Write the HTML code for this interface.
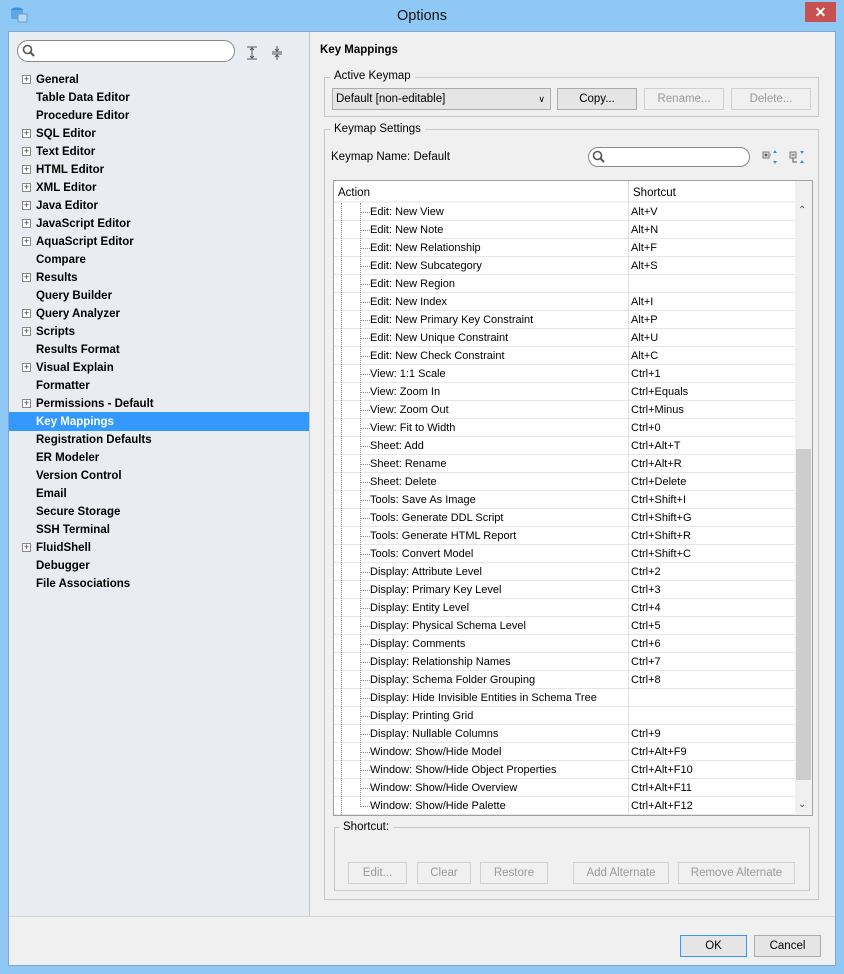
<!DOCTYPE html>
<html><head><meta charset="utf-8"><style>
*{box-sizing:border-box;margin:0;padding:0}
body{width:844px;height:974px;background:#8fc7f5;font-family:"Liberation Sans",sans-serif;font-size:11.5px;color:#000;position:relative;overflow:hidden}
.abs{position:absolute}
.title{left:0;top:0;width:844px;height:31px;text-align:center;line-height:33px;font-size:14.5px;color:#111}
.close{left:805px;top:2px;width:31px;height:20px;background:#c75050;color:#fff;text-align:center;line-height:20px;font-size:14px;font-weight:bold}
.client{left:8px;top:31px;width:828px;height:935px;background:#f0f0f0;border:1px solid #7fa7cf}
.left{left:9px;top:32px;width:301px;height:884px;background:#e9ecf0;border-right:1px solid #c8c8c8}
.item{position:absolute;left:36px;font-weight:bold;font-size:11.5px;height:18px;line-height:18px}
.plus{position:absolute;left:22px;width:9px;height:9px;border:1px solid #888;background:#fff;font-size:9px;line-height:7px;text-align:center;color:#333}
.sel{left:9px;top:412px;width:300px;height:19px;background:#3399ff}
.search{border:1px solid #888;border-radius:11px;background:#fff;height:22px}
.btn{position:absolute;border:1px solid #adadad;background:#e5e5e5;text-align:center;height:22px;line-height:20px;font-size:11.5px}
.dis{color:#999;border-color:#d0d0d0;background:#f0f0f0}
fieldset{position:absolute;border:1px solid #c8c8c8}
.lg{position:absolute;background:#f0f0f0;padding:0 4px;font-size:11.5px}
.row{position:absolute;left:334px;width:461px;height:18px;border-bottom:1px solid #e6e6e6;background:#fff;line-height:19px;font-size:11px}
.row .a{position:absolute;left:36px}
.row .s{position:absolute;left:294px;border-left:1px solid #e0e0e0;height:18px;padding-left:2px;top:0}
.row .d{position:absolute;left:26px;top:9px;width:10px;border-top:1px dotted #888}
</style></head><body>
<div class="abs title">Options</div>
<div class="abs close">✕</div>
<svg class="abs" style="left:10px;top:6px" width="18" height="18"><ellipse cx="7" cy="4" rx="6" ry="2.5" fill="#3d8fd6"/><rect x="1" y="4" width="12" height="9" fill="#5aa8e8"/><rect x="8" y="8" width="9" height="8" fill="#bcd9f2" stroke="#6a9cc7"/></svg>
<div class="abs client"></div>
<div class="abs left"></div>
<div class="abs search" style="left:17px;top:40px;width:218px"></div>
<svg class="abs" style="left:22px;top:44px" width="14" height="14"><circle cx="5.5" cy="5.5" r="4" fill="none" stroke="#555" stroke-width="1.6"/><line x1="8.5" y1="8.5" x2="12" y2="12" stroke="#555" stroke-width="2"/></svg>
<svg class="abs" style="left:246px;top:46px" width="12" height="14"><path d="M1 1h10M1 13h10M6 2v10M4 4l2-2 2 2M4 10l2 2 2-2" stroke="#555" fill="none"/></svg>
<svg class="abs" style="left:271px;top:46px" width="12" height="14"><path d="M1 6h10M1 8h10M6 0v5M4 3l2 2 2-2M6 9v5M4 11l2-2 2 2" stroke="#555" fill="none"/></svg>
<div class="abs sel"></div>
<div id="tree"></div>
<div class="abs" style="left:320px;top:44px;font-weight:bold;font-size:11.5px">Key Mappings</div>
<fieldset style="left:324px;top:77px;width:495px;height:40px"></fieldset>
<div class="lg" style="left:330px;top:70px">Active Keymap</div>
<div class="abs" style="left:332px;top:88px;width:219px;height:22px;border:1px solid #acacac;background:#e5e5e5;line-height:20px;padding-left:3px">Default [non-editable]<span style="position:absolute;right:5px;font-size:9px">&#8744;</span></div>
<div class="btn" style="left:557px;top:88px;width:80px">Copy...</div>
<div class="btn dis" style="left:644px;top:88px;width:80px">Rename...</div>
<div class="btn dis" style="left:731px;top:88px;width:80px">Delete...</div>
<fieldset style="left:324px;top:129px;width:495px;height:771px"></fieldset>
<div class="lg" style="left:330px;top:123px">Keymap Settings</div>
<div class="abs" style="left:331px;top:151px">Keymap Name: Default</div>
<div class="abs search" style="left:588px;top:147px;width:162px;height:20px"></div>
<svg class="abs" style="left:592px;top:150px" width="14" height="14"><circle cx="5.5" cy="5.5" r="4" fill="none" stroke="#555" stroke-width="1.6"/><line x1="8.5" y1="8.5" x2="12" y2="12" stroke="#555" stroke-width="2"/></svg>
<svg class="abs" style="left:762px;top:149px" width="16" height="16"><rect x="1" y="3" width="6" height="6" fill="#ddd" stroke="#777"/><path d="M2.5 6h3M4 4.5v3" stroke="#333"/><path d="M13 1l-2 3h4zM13 15l-2-3h4z" fill="#3a8fd0"/><path d="M8 6h2" stroke="#777" stroke-dasharray="1"/></svg>
<svg class="abs" style="left:789px;top:149px" width="16" height="16"><rect x="1" y="3" width="6" height="6" fill="#ddd" stroke="#777"/><path d="M2.5 6h3M4 9v4h4" stroke="#555" fill="none"/><path d="M13 5l-2-3h4zM13 11l-2 3h4z" fill="#3a8fd0"/></svg>
<div class="abs" style="left:333px;top:180px;width:480px;height:636px;border:1px solid #a0a0a0;background:#fff"></div>
<div class="abs" style="left:334px;top:181px;width:461px;height:22px;background:#fff;border-bottom:2px solid #eef2f8"><span style="position:absolute;left:4px;top:6px">Action</span><span style="position:absolute;left:294px;top:0;height:22px;border-left:1px solid #ddd;padding:6px 4px">Shortcut</span></div>
<div class="abs" style="left:795px;top:181px;width:17px;height:634px;background:#f0f0f0"></div>
<div class="abs" style="left:796px;top:449px;width:15px;height:331px;background:#cdcdcd"></div>
<div class="abs" style="left:798px;top:205px;font-size:10px;color:#555">&#8963;</div>
<div class="abs" style="left:798px;top:799px;font-size:10px;color:#555">&#8964;</div>
<div id="rows"></div>
<div class="abs" style="left:341px;top:203px;height:612px;border-left:1px dotted #888"></div>
<div class="abs" style="left:360px;top:203px;height:604px;border-left:1px dotted #888"></div>
<fieldset style="left:334px;top:827px;width:476px;height:64px"></fieldset>
<div class="lg" style="left:339px;top:821px">Shortcut:</div>
<div class="btn dis" style="left:348px;top:862px;width:59px">Edit...</div>
<div class="btn dis" style="left:417px;top:862px;width:54px">Clear</div>
<div class="btn dis" style="left:480px;top:862px;width:68px">Restore</div>
<div class="btn dis" style="left:573px;top:862px;width:96px">Add Alternate</div>
<div class="btn dis" style="left:678px;top:862px;width:117px">Remove Alternate</div>
<div class="abs" style="left:9px;top:916px;width:826px;border-top:1px solid #d5d5d5"></div>
<div class="btn" style="left:680px;top:935px;width:67px;border-color:#3399ff">OK</div>
<div class="btn" style="left:754px;top:935px;width:67px">Cancel</div>
<script>
var t=[["General",1],["Table Data Editor"],["Procedure Editor"],["SQL Editor",1],["Text Editor",1],["HTML Editor",1],["XML Editor",1],["Java Editor",1],["JavaScript Editor",1],["AquaScript Editor",1],["Compare"],["Results",1],["Query Builder"],["Query Analyzer",1],["Scripts",1],["Results Format"],["Visual Explain",1],["Formatter"],["Permissions - Default",1],["Key Mappings"],["Registration Defaults"],["ER Modeler"],["Version Control"],["Email"],["Secure Storage"],["SSH Terminal"],["FluidShell",1],["Debugger"],["File Associations"]];
var h="";t.forEach(function(e,i){var y=71+i*18;h+='<div class="item" style="top:'+y+'px;'+(i==19?'color:#fff':'')+'">'+e[0]+'</div>';if(e[1])h+='<div class="plus" style="top:'+(y+4)+'px">+</div>'});
document.getElementById("tree").innerHTML=h;
var r=[["Edit: New View","Alt+V"],["Edit: New Note","Alt+N"],["Edit: New Relationship","Alt+F"],["Edit: New Subcategory","Alt+S"],["Edit: New Region",""],["Edit: New Index","Alt+I"],["Edit: New Primary Key Constraint","Alt+P"],["Edit: New Unique Constraint","Alt+U"],["Edit: New Check Constraint","Alt+C"],["View: 1:1 Scale","Ctrl+1"],["View: Zoom In","Ctrl+Equals"],["View: Zoom Out","Ctrl+Minus"],["View: Fit to Width","Ctrl+0"],["Sheet: Add","Ctrl+Alt+T"],["Sheet: Rename","Ctrl+Alt+R"],["Sheet: Delete","Ctrl+Delete"],["Tools: Save As Image","Ctrl+Shift+I"],["Tools: Generate DDL Script","Ctrl+Shift+G"],["Tools: Generate HTML Report","Ctrl+Shift+R"],["Tools: Convert Model","Ctrl+Shift+C"],["Display: Attribute Level","Ctrl+2"],["Display: Primary Key Level","Ctrl+3"],["Display: Entity Level","Ctrl+4"],["Display: Physical Schema Level","Ctrl+5"],["Display: Comments","Ctrl+6"],["Display: Relationship Names","Ctrl+7"],["Display: Schema Folder Grouping","Ctrl+8"],["Display: Hide Invisible Entities in Schema Tree",""],["Display: Printing Grid",""],["Display: Nullable Columns","Ctrl+9"],["Window: Show/Hide Model","Ctrl+Alt+F9"],["Window: Show/Hide Object Properties","Ctrl+Alt+F10"],["Window: Show/Hide Overview","Ctrl+Alt+F11"],["Window: Show/Hide Palette","Ctrl+Alt+F12"]];
h="";r.forEach(function(e,i){var y=203+i*18;h+='<div class="row" style="top:'+y+'px"><div class="d"></div><span class="a">'+e[0]+'</span><span class="s">'+e[1]+'</span></div>'});
document.getElementById("rows").innerHTML=h;
</script>
</body></html>
